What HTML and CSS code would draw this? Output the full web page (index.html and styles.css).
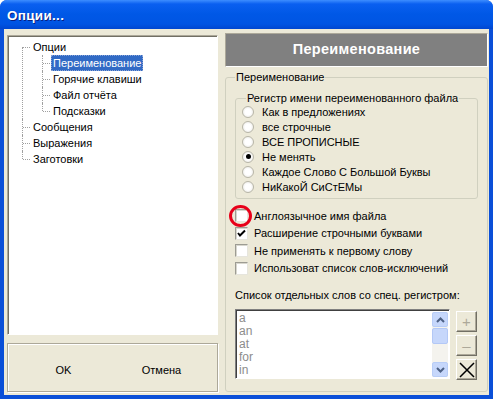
FILE: index.html
```html
<!DOCTYPE html>
<html>
<head>
    <title>Опции...</title>
    <link rel="stylesheet" href="styles.css">
</head>
<body>
    <div class="window">
        <div class="titlebar">Опции...</div>

        <div class="client">
            <div class="left">
                <div class="tree">
                    <ul class="tree-root">
                        <li><span>Опции</span>
                            <ul>
                                <li><span class="selected">Переименование</span></li>
                                <li><span>Горячие клавиши</span></li>
                                <li><span>Файл отчёта</span></li>
                                <li><span>Подсказки</span></li>
                            </ul>
                        </li>
                        <li><span>Сообщения</span></li>
                        <li><span>Выражения</span></li>
                        <li><span>Заготовки</span></li>
                    </ul>
                </div>
                <div class="dlg-buttons">
                    <div class="flat-btn">OK</div>
                    <div class="flat-btn">Отмена</div>
                </div>
            </div>

            <div class="right">
                <div class="page-header">Переименование</div>

                <fieldset class="group outer">
                    <legend>Переименование</legend>

                    <fieldset class="group inner">
                        <legend>Регистр имени переименованного файла</legend>
                        <div class="radios">
                            <div class="opt"><span class="radio"></span>Как в предложениях</div>
                            <div class="opt"><span class="radio"></span>все строчные</div>
                            <div class="opt"><span class="radio"></span>ВСЕ ПРОПИСНЫЕ</div>
                            <div class="opt"><span class="radio on"></span>Не менять</div>
                            <div class="opt"><span class="radio"></span>Каждое Слово С Большой Буквы</div>
                            <div class="opt"><span class="radio"></span>НиКакоЙ СиСтЕМы</div>
                        </div>
                    </fieldset>

                    <div class="checks">
                        <div class="opt marked"><span class="check"></span>Англоязычное имя файла</div>
                        <div class="opt"><span class="check on">
                            <svg width="11" height="11" viewBox="0 0 11 11"><path d="M2 5 L4 7.5 L9 2.5" fill="none" stroke="#000" stroke-width="2"/></svg>
                        </span>Расширение строчными буквами</div>
                        <div class="opt"><span class="check"></span>Не применять к первому слову</div>
                        <div class="opt"><span class="check"></span>Использоват список слов-исключений</div>
                    </div>

                    <div class="list-label">Список отдельных слов со спец. регистром:</div>

                    <div class="list-row">
                        <div class="listbox">
                            <div class="items">
                                <div>a</div>
                                <div>an</div>
                                <div>at</div>
                                <div>for</div>
                                <div>in</div>
                            </div>
                            <div class="scrollbar">
                                <div class="sb-btn">
                                    <svg width="9" height="6" viewBox="0 0 9 6"><path d="M1 5 L4.5 1.5 L8 5" fill="none" stroke="#4d6185" stroke-width="2"/></svg>
                                </div>
                                <div class="sb-thumb"></div>
                                <div class="sb-track"></div>
                                <div class="sb-btn">
                                    <svg width="9" height="6" viewBox="0 0 9 6"><path d="M1 1 L4.5 4.5 L8 1" fill="none" stroke="#4d6185" stroke-width="2"/></svg>
                                </div>
                            </div>
                        </div>
                        <div class="side-btns">
                            <div class="tool-btn disabled">+</div>
                            <div class="tool-btn disabled">–</div>
                            <div class="tool-btn">
                                <svg width="16" height="16" viewBox="0 0 16 16"><path d="M1 1 L15 15 M15 1 L1 15" stroke="#000" stroke-width="1.5"/></svg>
                            </div>
                        </div>
                    </div>
                </fieldset>
            </div>
        </div>
    </div>
</body>
</html>
```

FILE: styles.css
```css
body { margin: 0; font-family: "Liberation Sans", Arial, sans-serif; font-size: 11px; color: #000; }

.window { width: 493px; height: 399px; box-sizing: border-box; display: flex; flex-direction: column;
          background: #0a4fd8; border-radius: 7px 7px 0 0; overflow: hidden; }
.titlebar { height: 29px; flex: none; box-sizing: border-box; padding: 3px 0 0 7px; line-height: 26px; color: #fff;
            font-weight: bold; font-size: 13.5px; letter-spacing: 0.3px;
            text-shadow: 1px 1px #0a1e80;
            background: linear-gradient(#3d8dff 0, #0a5ff0 4px, #0058e6 14px, #0054e3 24px, #0046d0 29px); }
.client { flex: 1; min-height: 0; display: flex; gap: 7px; margin: 0 4px 4px 4px; padding: 4px 1px 3px 3px; background: #ece9d8; }

/* left side: tree + OK/Cancel */
.left { width: 211px; flex: none; display: flex; flex-direction: column; gap: 8px; margin-top: 2px; }
.tree { flex: 1; background: #fff; border: 1px solid; border-color: #aca899 #fff #fff #aca899;
        box-shadow: inset 1px 1px #716f64; padding-top: 3px; }
.tree ul { list-style: none; margin: 0; padding: 0; }
.tree-root { padding-left: 14px !important; }
.tree li { position: relative; padding-left: 9px; line-height: 16px; }
.tree li > span { padding: 0 2px; display: inline-block; height: 16px; }
.tree li::before { content: ""; position: absolute; left: 0; top: 0; bottom: 0; border-left: 1px dotted #a0a0a0; }
.tree li:last-child::before { bottom: auto; height: 8px; }
.tree-root > li:first-child::before { top: 8px; }
.tree li::after { content: ""; position: absolute; left: 1px; top: 8px; width: 7px; border-top: 1px dotted #a0a0a0; }
.tree li ul { padding-left: 11px; }
.selected { background: #316ac5; color: #fff; outline: 1px dotted #8aa4d6; outline-offset: -1px; }

.dlg-buttons { height: 49px; flex: none; display: flex; justify-content: center; align-items: center; gap: 8px;
               border: 1px solid #aca899; box-shadow: inset 1px 1px #fff, 1px 1px #fff; padding-top: 4px; box-sizing: border-box; }
.flat-btn { width: 90px; text-align: center; }

/* right side */
.right { flex: 1; min-width: 0; display: flex; flex-direction: column; }
.page-header { height: 34px; flex: none; box-sizing: border-box; background: #808080; color: #fff;
               border: 1px solid; border-color: #aca899 #fff #fff #aca899;
               font-weight: bold; font-size: 14.5px; text-align: center; line-height: 31px; letter-spacing: 0.3px; }

.group { border: 1px solid #d0d0bf; border-radius: 3px; margin: 0; min-width: 0; }
.group legend { padding: 0 1px; line-height: 14px; white-space: nowrap; }
.outer { flex: 1; min-height: 0; margin-top: 3px; padding: 0 9px 8px 9px; display: flex; flex-direction: column; }
.inner { margin: 7px 0 0 0; padding: 0 0 4px 5px; margin-right: 0; }
.inner legend { margin-left: 5px; }

.opt { display: flex; align-items: center; white-space: nowrap; }
.radios { margin-top: -1px; }
.radios .opt { height: 15px; }
.radio { width: 12px; height: 12px; border-radius: 50%; margin: 0 8px 0 1px; box-sizing: border-box;
         background: radial-gradient(#fff 40%, #e4e3dc); border: 1px solid #b8b6a8;
         display: flex; align-items: center; justify-content: center; }
.radio.on::after { content: ""; width: 5px; height: 5px; border-radius: 50%; background: #000; }

.checks { margin-top: 8px; }
.checks .opt { height: 17.5px; position: relative; }
.check { width: 13px; height: 13px; box-sizing: border-box; margin-right: 6px; background: #fff;
         border: 1px solid; border-color: #9d9c93 #e6e5dd #e6e5dd #9d9c93; box-shadow: inset 1px 1px #d8d7ce;
         display: flex; align-items: center; justify-content: center; }
.marked::before { content: ""; position: absolute; left: -6px; top: -2px; width: 23px; height: 22px;
                  box-sizing: border-box; border: 3px solid #e8001a; border-radius: 50%; }

.list-label { margin-top: 11px; line-height: 14px; white-space: nowrap; }
.list-row { display: flex; gap: 6px; margin-top: 7px; }
.listbox { width: 215px; height: 70px; box-sizing: border-box; display: flex; background: #fff;
           border: 1px solid; border-color: #808080 #fff #fff #808080; box-shadow: inset 1px 1px #404040; overflow: hidden; }
.items { flex: 1; padding: 2px 0 0 3px; color: #8c8c8c; line-height: 13px; font-size: 12px; }
.scrollbar { width: 16px; margin: 2px 1px 1px 0; display: flex; flex-direction: column; gap: 1px; background: #f4f3ee; }
.sb-btn { height: 15px; box-sizing: border-box; border: 1px solid #b8cdf7; border-radius: 2px; background: #c6d7fb;
          display: flex; align-items: center; justify-content: center; }
.sb-thumb { height: 16px; box-sizing: border-box; border: 1px solid #b3c8f6; border-radius: 2px; background: #c6d7fb; }
.sb-track { flex: 1; }

.side-btns { display: flex; flex-direction: column; gap: 3px; margin-top: 2px; }
.tool-btn { width: 21px; height: 21px; box-sizing: border-box; background: #ece9d8;
            border: 1px solid; border-color: #fff #716f64 #716f64 #fff; box-shadow: inset -1px -1px #aca899;
            display: flex; align-items: center; justify-content: center; font-size: 15px; }
.tool-btn.disabled { color: #aca899; }
```
